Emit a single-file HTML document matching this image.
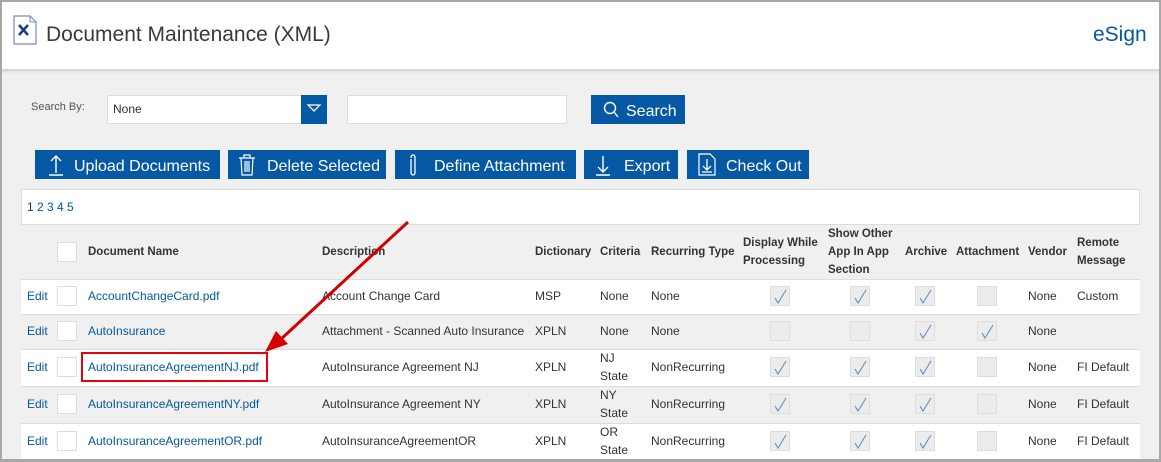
<!DOCTYPE html>
<html><head><style>
*{box-sizing:border-box;margin:0;padding:0}
body{width:1161px;height:462px;overflow:hidden;font-family:"Liberation Sans",sans-serif;background:#f0f0f0;position:relative;font-size:12px;color:#333}
.frame{position:absolute;left:0;top:0;width:1161px;height:462px;border:2px solid #a8a8a8;border-bottom-width:3px;pointer-events:none;z-index:10}
.hdr{position:absolute;left:0;top:0;width:1161px;height:69px;background:#fff;box-shadow:0 2px 4px rgba(0,0,0,.15)}
.a{position:absolute;white-space:nowrap}
.btn{position:absolute;background:#0559a4;color:#fff;font-size:16px;height:29px;line-height:34px}
.btn svg{position:absolute}
.tbl{position:absolute;left:21px;top:189px;width:1119px;height:273px;background:#fff;border:1px solid #ddd}
.row{position:absolute;left:21px;width:1119px;border-top:1px solid #ddd}
.g{background:#f0f0f0}
.cb{position:absolute;width:20px;height:20px;background:#fff;border:1px solid #ddd}
.ck{position:absolute;width:20px;height:20px;background:#ececec;border:1px solid #ddd}
.lnk{color:#0559a4}
.th{font-weight:bold;color:#333;line-height:18px;font-size:11.5px}
</style></head><body>
<div class="hdr"></div>
<svg class="a" style="left:13px;top:15px" width="24" height="30" viewBox="0 0 24 30"><path d="M1 1H17L23 7V29H1Z" fill="#fff" stroke="#7a8ac8" stroke-width="1.2"/><path d="M17 1V7H23" fill="none" stroke="#7a8ac8"/><path d="M6 10L15 20M15 10L6 20" stroke="#1d3a8a" stroke-width="2.5"/></svg>
<div class="a" style="left:46px;top:23px;font-size:21px;color:#3a3a3a">Document Maintenance (XML)</div>
<div class="a" style="left:1093px;top:23px;font-size:21px;color:#0559a4">eSign</div>

<div class="a" style="left:31px;top:101px;font-size:11px;color:#555">Search By:</div>
<div class="a" style="left:107px;top:95px;width:220px;height:29px;background:#fff;border:1px solid #ddd"></div>
<div class="a" style="left:113px;top:102px;font-size:12px;color:#333">None</div>
<div class="a" style="left:301px;top:95px;width:26px;height:29px;background:#0559a4"></div>
<svg class="a" style="left:307px;top:104px" width="14" height="8"><path d="M1 1H13L7 7Z" fill="none" stroke="#fff" stroke-width="1.3"/></svg>
<div class="a" style="left:347px;top:95px;width:220px;height:29px;background:#fff;border:1px solid #ddd"></div>
<div class="btn" style="left:591px;top:95px;width:94px;padding-left:35px">Search<svg style="left:12px;top:6px" width="16" height="17"><circle cx="7" cy="7" r="5.5" fill="none" stroke="#fff" stroke-width="1.4"/><path d="M11 11L15 16" stroke="#fff" stroke-width="1.4"/></svg></div>

<div class="btn" style="left:35px;top:150px;width:185px;padding-left:39px">Upload Documents<svg style="left:13px;top:4px" width="16" height="22"><path d="M8 2V19M3 7L8 2L13 7M1 21H15" fill="none" stroke="#fff" stroke-width="1.4"/></svg></div>
<div class="btn" style="left:228px;top:150px;width:158px;padding-left:39px">Delete Selected<svg style="left:10px;top:4px" width="18" height="22"><path d="M1 4H17M6 4V1H12V4M3 4L4 21H14L15 4M7 7V18M9 7V18M11 7V18" fill="none" stroke="#fff" stroke-width="1.2"/></svg></div>
<div class="btn" style="left:395px;top:150px;width:181px;padding-left:39px">Define Attachment<svg style="left:13px;top:4px" width="10" height="22"><path d="M3 5V18Q3 21 5 21Q7 21 7 18V4Q7 1 5 1Q3 1 3 4" fill="none" stroke="#fff" stroke-width="1.3"/></svg></div>
<div class="btn" style="left:584px;top:150px;width:94px;padding-left:40px">Export<svg style="left:11px;top:4px" width="16" height="22"><path d="M8 2V18M3 13L8 18L13 13M1 21H15" fill="none" stroke="#fff" stroke-width="1.4"/></svg></div>
<div class="btn" style="left:687px;top:150px;width:122px;padding-left:39px">Check Out<svg style="left:11px;top:3px" width="18" height="24"><path d="M1 1H12L17 6V22H1Z" fill="none" stroke="#fff" stroke-width="1.2"/><path d="M9 6V17M5 13L9 17L13 13M4 19H14" fill="none" stroke="#fff" stroke-width="1.3"/></svg></div>

<div class="tbl"></div>
<div class="a lnk" style="left:27px;top:200px;font-size:12px"><span style="color:#333">1</span> 2 3 4 5</div>
<div class="row g" style="top:224px;height:56px"></div>
<div class="row" style="top:279px;height:36px;background:#fff"></div>
<div class="row g" style="top:314px;height:36px"></div>
<div class="row" style="top:349px;height:38px;background:#fff"></div>
<div class="row g" style="top:386px;height:38px"></div>
<div class="row" style="top:423px;height:39px;background:#fff"></div>

<div class="cb" style="left:57px;top:242px"></div>
<div class="a th" style="left:88px;top:243px">Document Name</div>
<div class="a th" style="left:322px;top:243px">Description</div>
<div class="a th" style="left:535px;top:243px">Dictionary</div>
<div class="a th" style="left:600px;top:243px">Criteria</div>
<div class="a th" style="left:651px;top:243px">Recurring Type</div>
<div class="a th" style="left:743px;top:234px">Display While<br>Processing</div>
<div class="a th" style="left:828px;top:225px">Show Other<br>App In App<br>Section</div>
<div class="a th" style="left:905px;top:243px">Archive</div>
<div class="a th" style="left:956px;top:243px">Attachment</div>
<div class="a th" style="left:1028px;top:243px">Vendor</div>
<div class="a th" style="left:1077px;top:234px">Remote<br>Message</div>

<div id="rows"></div>
<script>
var R=[[296,"AccountChangeCard.pdf","Account Change Card","MSP","None","None",[1,1,1,0],"Custom"],
[331,"AutoInsurance","Attachment - Scanned Auto Insurance","XPLN","None","None",[0,0,1,1],""],
[367,"AutoInsuranceAgreementNJ.pdf","AutoInsurance Agreement NJ","XPLN","NJ<br>State","NonRecurring",[1,1,1,0],"FI Default"],
[404,"AutoInsuranceAgreementNY.pdf","AutoInsurance Agreement NY","XPLN","NY<br>State","NonRecurring",[1,1,1,0],"FI Default"],
[441,"AutoInsuranceAgreementOR.pdf","AutoInsuranceAgreementOR","XPLN","OR<br>State","NonRecurring",[1,1,1,0],"FI Default"]];
var h="",cx=[770,850,915,977];
R.forEach(function(r){var y=r[0];
h+='<div class="a lnk" style="left:27px;top:'+(y-7)+'px">Edit</div><div class="cb" style="left:57px;top:'+(y-10)+'px"></div>';
h+='<div class="a lnk" style="left:88px;top:'+(y-7)+'px">'+r[1]+'</div>';
h+='<div class="a" style="left:322px;top:'+(y-7)+'px">'+r[2]+'</div>';
h+='<div class="a" style="left:535px;top:'+(y-7)+'px">'+r[3]+'</div>';
var two=r[4].indexOf("<br>")>0;
h+='<div class="a" style="left:600px;line-height:18px;top:'+(y-(two?18:9))+'px">'+r[4]+'</div>';
h+='<div class="a" style="left:651px;top:'+(y-7)+'px">'+r[5]+'</div>';
r[6].forEach(function(c,i){h+='<div class="ck" style="left:'+cx[i]+'px;top:'+(y-10)+'px">'+(c?'<svg width="18" height="18" style="position:absolute;left:0;top:0"><path d="M4 11L7 16L15 3" fill="none" stroke="#5b86c4" stroke-width="1"/></svg>':'')+'</div>';});
h+='<div class="a" style="left:1028px;top:'+(y-7)+'px">None</div>';
h+='<div class="a" style="left:1077px;top:'+(y-7)+'px">'+r[7]+'</div>';});
document.getElementById("rows").innerHTML=h;
</script>
<div class="a" style="left:81px;top:352px;width:187px;height:30px;border:2px solid #e8000b"></div>
<svg class="a" style="left:0;top:0;z-index:5" width="1161" height="462"><path d="M408 222L280 340" stroke="#d40000" stroke-width="3"/><path d="M265 352L276 331L288 344Z" fill="#d40000"/></svg>
<div class="frame"></div>
</body></html>
